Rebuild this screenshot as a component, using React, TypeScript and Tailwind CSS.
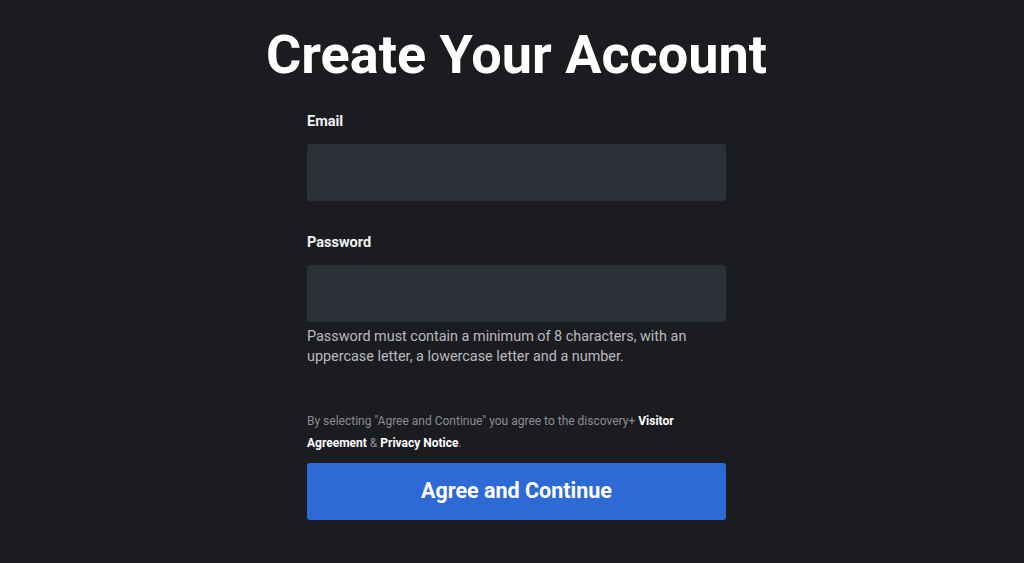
import React from 'react';

export default function App() {
  return (
    <div className="min-h-[563px] w-full bg-[#1b1c20] font-['Roboto',sans-serif] flex justify-center pl-[9px]">
      <div className="flex flex-col items-center">
        {/* Title */}
        <h1 className="mt-[28px] text-[54px] leading-none font-bold text-white">
          Create Your Account
        </h1>

        {/* Form */}
        <form className="w-[419px] mt-[30px] flex flex-col" onSubmit={(e) => e.preventDefault()}>
          <label className="text-[14.5px] leading-[20px] font-bold text-[#f2f2f4]">Email</label>
          <input
            type="email"
            className="mt-[12px] h-[57px] w-full rounded-[3px] bg-[#2b2f36] outline-none px-4 text-white"
          />

          <label className="mt-[32px] text-[14.5px] leading-[20px] font-bold text-[#f2f2f4]">Password</label>
          <input
            type="password"
            className="mt-[12px] h-[57px] w-full rounded-[3px] bg-[#2b2f36] outline-none px-4 text-white"
          />
          <p className="mt-[5px] text-[14.4px] leading-[20px] text-[#b9babe]">
            Password must contain a minimum of 8 characters, with an uppercase letter, a lowercase letter and a number.
          </p>

          <p className="mt-[43px] text-[12px] leading-[22px] text-[#8c8d92]">
            By selecting "Agree and Continue" you agree to the discovery+{' '}
            <span className="font-bold text-white">Visitor Agreement</span> &amp;{' '}
            <span className="font-bold text-white">Privacy Notice</span>.
          </p>

          <button
            type="submit"
            className="mt-[9px] h-[57px] w-full rounded-[3px] bg-[#2d6ad6] text-white text-[21.5px] font-bold"
          >
            Agree and Continue
          </button>
        </form>
      </div>
    </div>
  );
}
